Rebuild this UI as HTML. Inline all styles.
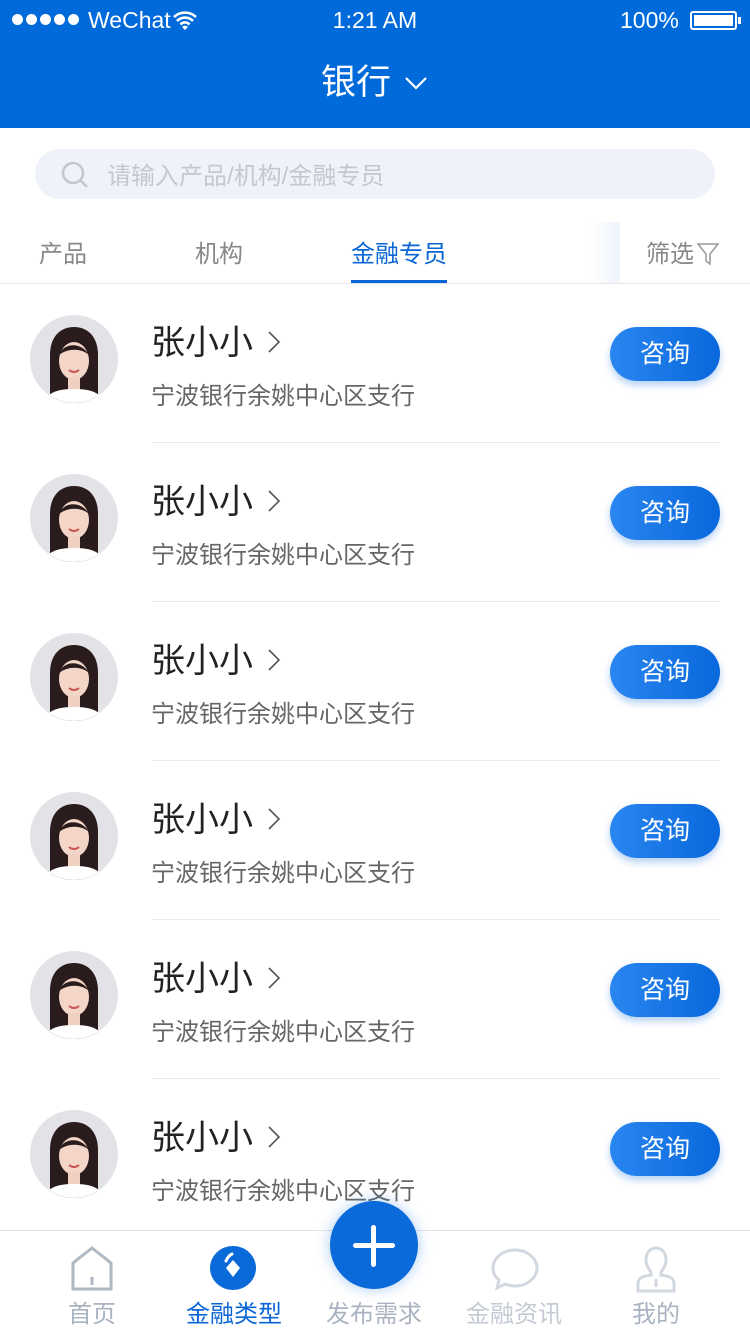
<!DOCTYPE html>
<html><head><meta charset="utf-8"><style>
*{margin:0;padding:0;box-sizing:border-box}
body{width:750px;height:1334px;overflow:hidden;background:#fff;font-family:"Liberation Sans","Noto Sans CJK SC",sans-serif;position:relative}
.hdr{position:absolute;left:0;top:0;width:750px;height:128px;background:#006ada;color:#fff}
.abs{position:absolute}
.row{position:absolute;left:0;width:750px;height:159px}
.row .av{position:absolute;left:30px;top:31px;width:88px;height:88px}
.row .nm{position:absolute;left:151px;top:39px;font-size:34px;color:#222;line-height:40px}
.row .ch{position:absolute;left:266px;top:46px}
.row .sb{position:absolute;left:151px;top:98px;font-size:24px;color:#666;line-height:30px}
.row .bt{position:absolute;left:610px;top:43px;width:110px;height:54px;border-radius:27px;background:linear-gradient(90deg,#2a86f0,#0868dc);color:#fff;font-size:25px;line-height:54px;text-align:center;box-shadow:0 4px 8px rgba(0,100,220,.3)}
.row .ln{position:absolute;left:152px;right:30px;bottom:0;height:1px;background:#ececf0}
.tb{position:absolute;top:1300px;font-size:24px;color:#a9b3c2;width:140px;text-align:center;line-height:30px}
</style></head><body>
<div class="hdr">
 <div class="abs" style="left:12px;top:14px;display:flex;gap:3px">
  <i style="width:11px;height:11px;border-radius:50%;background:#fff;display:block"></i><i style="width:11px;height:11px;border-radius:50%;background:#fff;display:block"></i><i style="width:11px;height:11px;border-radius:50%;background:#fff;display:block"></i><i style="width:11px;height:11px;border-radius:50%;background:#fff;display:block"></i><i style="width:11px;height:11px;border-radius:50%;background:#fff;display:block"></i></div>
 <div class="abs" style="left:88px;top:7px;font-size:23px">WeChat</div>
 <svg class="abs" style="left:172px;top:10px" width="26" height="20" viewBox="0 0 26 20"><path d="M2 7a16 16 0 0 1 22 0M5 11a11 11 0 0 1 16 0M8.5 14.5a6 6 0 0 1 9 0" stroke="#fff" stroke-width="2.6" fill="none"/><path d="M13 20l-3-3a4 4 0 0 1 6 0z" fill="#fff"/></svg>
 <div class="abs" style="left:0;width:750px;top:7px;text-align:center;font-size:23px">1:21 AM</div>
 <div class="abs" style="left:620px;top:7px;font-size:23px">100%</div>
 <div class="abs" style="left:690px;top:11px;width:47px;height:19px;border:2px solid #fff;border-radius:3px;padding:2px"><div style="background:#fff;width:100%;height:100%"></div></div>
 <div class="abs" style="left:738px;top:17px;width:3px;height:7px;background:#fff"></div>
 <div class="abs" style="left:321px;top:60px;font-size:35px;line-height:46px">银行</div>
 <svg class="abs" style="left:404px;top:76px" width="24" height="14"><path d="M2 2l10 10 10-10" stroke="#fff" stroke-width="2.2" fill="none"/></svg>
</div>
<div class="abs" style="left:35px;top:149px;width:680px;height:50px;border-radius:25px;background:#eff2f9"></div>
<svg class="abs" style="left:60px;top:160px" width="30" height="30"><circle cx="13" cy="13" r="10" stroke="#c3c7cf" stroke-width="2.5" fill="none"/><path d="M20 20l7 7" stroke="#c3c7cf" stroke-width="2.5"/></svg>
<div class="abs" style="left:107px;top:162px;font-size:24px;color:#c3c7cf;line-height:30px">请输入产品/机构/金融专员</div>
<div class="abs" style="left:39px;top:240px;font-size:24px;color:#888;line-height:30px">产品</div>
<div class="abs" style="left:195px;top:240px;font-size:24px;color:#888;line-height:30px">机构</div>
<div class="abs" style="left:351px;top:240px;font-size:24px;color:#0a66d6;line-height:30px">金融专员</div>
<div class="abs" style="left:351px;top:280px;width:96px;height:4px;background:#0a66d6"></div>
<div class="abs" style="left:590px;top:222px;width:30px;height:61px;background:linear-gradient(90deg,#fff,#eef3fb)"></div>
<div class="abs" style="left:646px;top:240px;font-size:24px;color:#888;line-height:30px">筛选</div>
<svg class="abs" style="left:696px;top:241px" width="24" height="26"><path d="M2 3h20l-8 10v10l-4-3v-7z" stroke="#999" stroke-width="1.5" fill="none"/></svg>
<div class="abs" style="left:0;top:283px;width:750px;height:1px;background:#e6e6e6"></div>

<div id="rows"></div>
<script>
var h='';
for(var i=0;i<6;i++){var t=284+i*159;
h+='<div class="row" style="top:'+t+'px"><svg class="av" viewBox="0 0 88 88"><defs><clipPath id="c'+i+'"><circle cx="44" cy="44" r="44"/></clipPath></defs><g clip-path="url(#c'+i+')"><rect width="88" height="88" fill="#e3e2e7"/><path d="M20 88V40c0-18 10-28 24-28s24 10 24 28v48z" fill="#2a1c1c"/><ellipse cx="44" cy="46" rx="15" ry="19" fill="#f3d6c8"/><path d="M38 62h12v14H38z" fill="#f0d0c0"/><path d="M14 88c4-12 16-14 30-14s26 2 30 14z" fill="#fff"/><path d="M29 40c4-12 22-14 30 0c-6-6-20-8-30 0z" fill="#2a1c1c"/><path d="M39 55q5 4 10 0" stroke="#c55" stroke-width="2" fill="none"/></g></svg><div class="nm">张小小</div><svg class="ch" width="16" height="24"><path d="M3 2l10 10-10 10" stroke="#555" stroke-width="1.6" fill="none"/></svg><div class="sb">宁波银行余姚中心区支行</div><div class="bt">咨询</div>'+(i<5?'<div class="ln"></div>':'')+'</div>';}
document.getElementById('rows').innerHTML=h;
</script>

<div class="abs" style="left:0;top:1230px;width:750px;height:104px;background:#fff;border-top:1px solid #e2e4e8"></div>
<div class="abs" style="left:330px;top:1201px;width:88px;height:88px;border-radius:50%;background:#0a6ada;box-shadow:0 0 14px rgba(10,106,218,.35)"></div>
<div class="abs" style="left:353px;top:1243px;width:42px;height:5px;border-radius:3px;background:#fff"></div>
<div class="abs" style="left:371px;top:1225px;width:5px;height:42px;border-radius:3px;background:#fff"></div>
<svg class="abs" style="left:70px;top:1245px" width="44" height="46"><path d="M3 44V18L22 3l19 15v26z M22 32v8" stroke="#b0b8c4" stroke-width="3" fill="none"/></svg>
<svg class="abs" style="left:210px;top:1245px" width="48" height="46"><ellipse cx="23" cy="23" rx="23" ry="22" fill="#0a6ada"/><path d="M23 15l7 8-7 9-7-9z" fill="#fff"/><path d="M16 16q2-5 6-7" stroke="#fff" stroke-width="3" fill="none" stroke-linecap="round"/></svg>
<svg class="abs" style="left:490px;top:1247px" width="50" height="44"><path d="M25 3c12 0 22 8 22 18s-10 18-22 18c-4 0-7-1-10-2l-8 4 2-8C5 30 3 26 3 21 3 11 13 3 25 3z" stroke="#d2d8e0" stroke-width="3" fill="none"/></svg>
<svg class="abs" style="left:634px;top:1245px" width="44" height="48"><path d="M22 3c7 0 10 6 10 12 0 5-3 10-5 12v3c8 1 13 3 13 8v8H4v-8c0-5 5-7 13-8v-3c-2-2-5-7-5-12 0-6 3-12 10-12zM22 34v8" stroke="#d2d8e0" stroke-width="3" fill="none"/></svg>
<div class="tb" style="left:22px">首页</div>
<div class="tb" style="left:164px;color:#0a66d6">金融类型</div>
<div class="tb" style="left:304px">发布需求</div>
<div class="tb" style="left:444px;color:#c3cad4">金融资讯</div>
<div class="tb" style="left:586px">我的</div>
</body></html>
